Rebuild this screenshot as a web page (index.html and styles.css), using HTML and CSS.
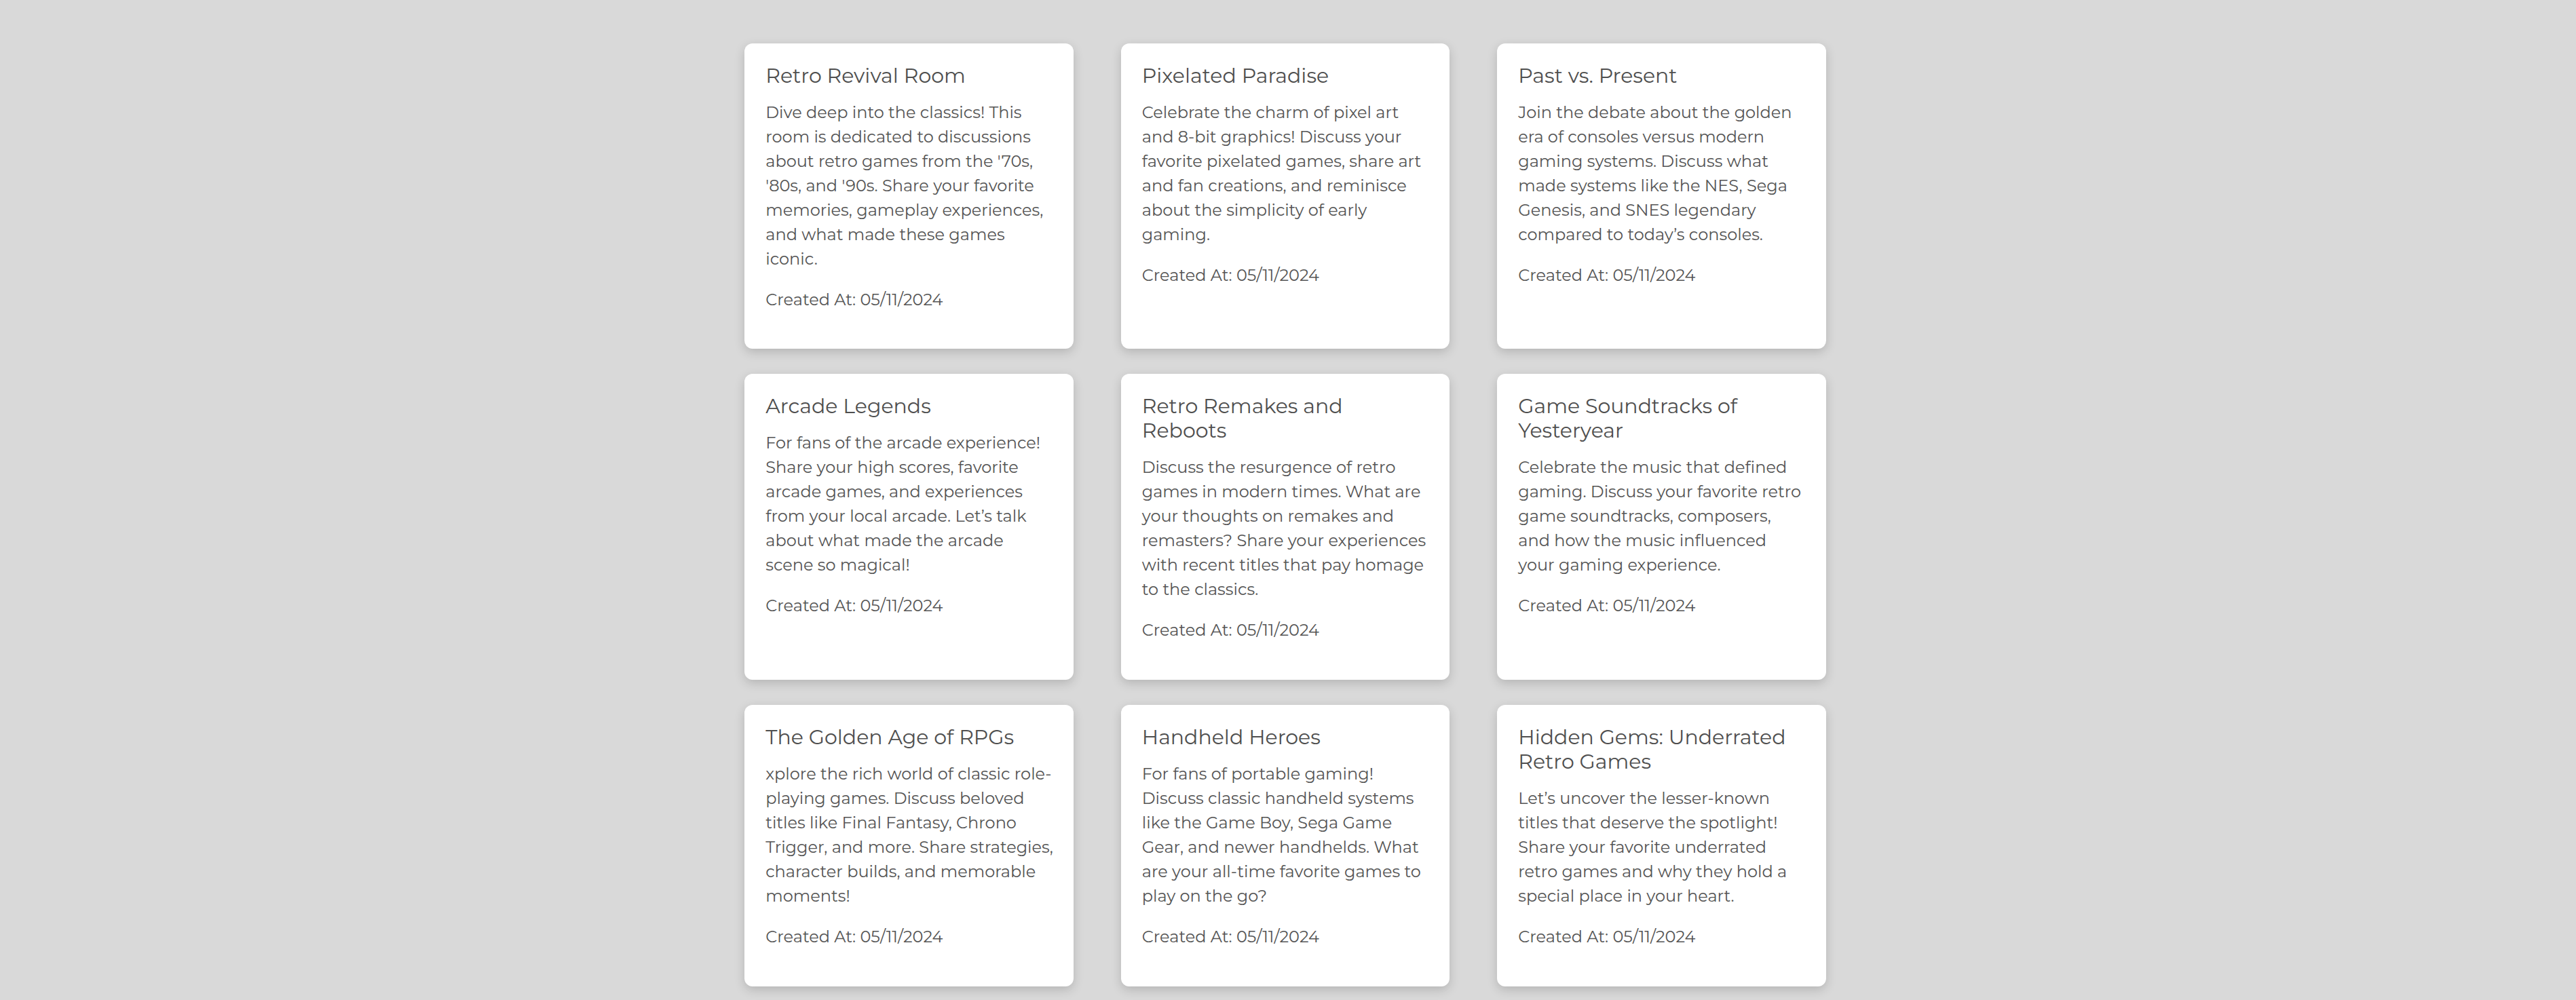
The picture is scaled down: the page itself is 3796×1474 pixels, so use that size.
FILE: index.html
```html
<!DOCTYPE html>
<html lang="en">
<head>
<meta charset="utf-8">
<title>Rooms</title>
<link rel="stylesheet" href="styles.css">
</head>
<body>
<main class="page">
  <section class="rooms">
    <article class="room-card">
      <h2 class="room-title">Retro Revival Room</h2>
      <p class="room-desc">Dive deep into the classics! This room is dedicated to discussions about retro games from the '70s, '80s, and '90s. Share your favorite memories, gameplay experiences, and what made these games iconic.</p>
      <p class="room-date">Created At: 05/11/2024</p>
    </article>
    <article class="room-card">
      <h2 class="room-title">Pixelated Paradise</h2>
      <p class="room-desc">Celebrate the charm of pixel art and 8-bit graphics! Discuss your favorite pixelated games, share art and fan creations, and reminisce about the simplicity of early gaming.</p>
      <p class="room-date">Created At: 05/11/2024</p>
    </article>
    <article class="room-card">
      <h2 class="room-title">Past vs. Present</h2>
      <p class="room-desc">Join the debate about the golden era of consoles versus modern gaming systems. Discuss what made systems like the NES, Sega Genesis, and SNES legendary compared to today’s consoles.</p>
      <p class="room-date">Created At: 05/11/2024</p>
    </article>
    <article class="room-card">
      <h2 class="room-title">Arcade Legends</h2>
      <p class="room-desc">For fans of the arcade experience! Share your high scores, favorite arcade games, and experiences from your local arcade. Let’s talk about what made the arcade scene so magical!</p>
      <p class="room-date">Created At: 05/11/2024</p>
    </article>
    <article class="room-card">
      <h2 class="room-title">Retro Remakes and Reboots</h2>
      <p class="room-desc">Discuss the resurgence of retro games in modern times. What are your thoughts on remakes and remasters? Share your experiences with recent titles that pay homage to the classics.</p>
      <p class="room-date">Created At: 05/11/2024</p>
    </article>
    <article class="room-card">
      <h2 class="room-title">Game Soundtracks of Yesteryear</h2>
      <p class="room-desc">Celebrate the music that defined gaming. Discuss your favorite retro game soundtracks, composers, and how the music influenced your gaming experience.</p>
      <p class="room-date">Created At: 05/11/2024</p>
    </article>
    <article class="room-card">
      <h2 class="room-title">The Golden Age of RPGs</h2>
      <p class="room-desc">xplore the rich world of classic role-playing games. Discuss beloved titles like Final Fantasy, Chrono Trigger, and more. Share strategies, character builds, and memorable moments!</p>
      <p class="room-date">Created At: 05/11/2024</p>
    </article>
    <article class="room-card">
      <h2 class="room-title">Handheld Heroes</h2>
      <p class="room-desc">For fans of portable gaming! Discuss classic handheld systems like the Game Boy, Sega Game Gear, and newer handhelds. What are your all-time favorite games to play on the go?</p>
      <p class="room-date">Created At: 05/11/2024</p>
    </article>
    <article class="room-card">
      <h2 class="room-title">Hidden Gems: Underrated Retro Games</h2>
      <p class="room-desc">Let’s uncover the lesser-known titles that deserve the spotlight! Share your favorite underrated retro games and why they hold a special place in your heart.</p>
      <p class="room-date">Created At: 05/11/2024</p>
    </article>
  </section>
</main>
</body>
</html>
```

FILE: styles.css
```css
html, body {
  margin: 0;
  padding: 0;
}

body {
  background: #d9d9d9;
  font-family: "Montserrat", "Open Sans", sans-serif;
  color: #555555;
}

.page {
  padding: 63.5px 8px 40px 0;
}

.rooms {
  display: grid;
  grid-template-columns: repeat(3, 484.5px);
  column-gap: 70px;
  row-gap: 37.4px;
  justify-content: center;
}

.room-card {
  background: #ffffff;
  border-radius: 12px;
  padding: 30px 29.5px 30.5px 31px;
  box-shadow: 0 5px 15px rgba(0, 0, 0, 0.17);
}

.room-title {
  margin: 0 0 18px;
  font-size: 30px;
  line-height: 36px;
  font-weight: 400;
  color: #4f4f4f;
}

.room-desc {
  margin: 0;
  font-size: 24px;
  line-height: 36px;
}

.room-date {
  margin: 24px 0;
  font-size: 24px;
  line-height: 36px;
}
```
